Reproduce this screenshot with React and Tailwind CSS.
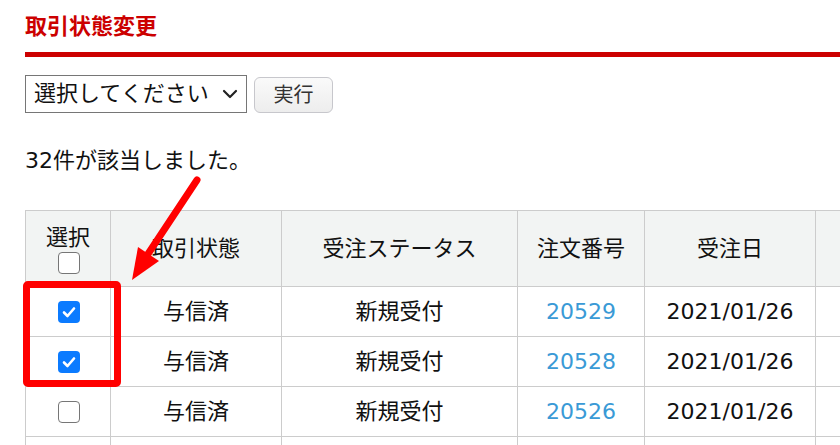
import React from "react";

const FONT = { fontFamily: '"DejaVu Sans", "Noto Sans CJK JP", sans-serif' };

function Box({ checked }) {
  if (checked) {
    return (
      <span className="inline-flex h-[22px] w-[22px] items-center justify-center rounded-[4px] bg-[#0b7bff]">
        <svg width="16" height="16" viewBox="0 0 16 16">
          <path d="M3 8.5 L6.5 12 L13 4.5" fill="none" stroke="#fff" strokeWidth="2.6" strokeLinecap="round" strokeLinejoin="round" />
        </svg>
      </span>
    );
  }
  return <span className="inline-block h-[22px] w-[22px] rounded-[4px] border border-[#767676] bg-white" />;
}

const rows = [
  { checked: true, no: "20529" },
  { checked: true, no: "20528" },
  { checked: false, no: "20526" },
];

export default function App() {
  return (
    <div className="relative h-[445px] w-[840px] overflow-hidden bg-white text-[22px] text-[#111]" style={FONT}>
      <div className="pl-[25px]">
        <div className="mt-[12px] h-[30px] text-[22px] font-bold leading-[30px] text-[#cc0000]">取引状態変更</div>
        <div className="mt-[10px] h-[5px] bg-[#cc0000]" />
        <div className="mt-[18px] flex items-end gap-[7px]">
          <div className="flex h-[38px] w-[222px] items-center justify-between border border-[#767676] bg-white pl-[8px] pr-[8px]">
            <span className="leading-none">選択してください</span>
            <svg width="16" height="10" viewBox="0 0 16 10">
              <path d="M2 2 L8 8 L14 2" fill="none" stroke="#222" strokeWidth="2.2" strokeLinecap="round" strokeLinejoin="round" />
            </svg>
          </div>
          <button className="flex h-[36px] w-[79px] items-center justify-center rounded-[6px] border border-[#c7c7cc] bg-gradient-to-b from-[#fafafa] to-[#ededed] text-[20px] text-[#333]">
            実行
          </button>
        </div>
        <div className="mt-[33px] h-[30px] leading-[30px]">32件が該当しました。</div>
        <table className="mt-[34px] table-fixed border-collapse" style={{ width: 990 }}>
          <colgroup>
            <col className="w-[85px]" />
            <col className="w-[171px]" />
            <col className="w-[236px]" />
            <col className="w-[127px]" />
            <col className="w-[171px]" />
            <col className="w-[200px]" />
          </colgroup>
          <thead>
            <tr className="h-[76px] bg-[#f2f4f3]">
              <th className="border border-[#cccccc] text-center font-normal">
                <div className="leading-[28px]">選択</div>
                <div className="flex justify-center pl-[2px]"><Box checked={false} /></div>
              </th>
              <th className="border border-[#cccccc] text-center font-normal">取引状態</th>
              <th className="border border-[#cccccc] text-center font-normal">受注ステータス</th>
              <th className="border border-[#cccccc] text-center font-normal">注文番号</th>
              <th className="border border-[#cccccc] text-center font-normal">受注日</th>
              <th className="border border-[#cccccc] text-center font-normal"></th>
            </tr>
          </thead>
          <tbody>
            {rows.map((r) => (
              <tr key={r.no} className="h-[50px]">
                <td className="border border-[#cccccc] text-center">
                  <div className="flex justify-center pl-[2px]"><Box checked={r.checked} /></div>
                </td>
                <td className="border border-[#cccccc] text-center">与信済</td>
                <td className="border border-[#cccccc] text-center">新規受付</td>
                <td className="border border-[#cccccc] text-center text-[#3a9ad6]">{r.no}</td>
                <td className="border border-[#cccccc] text-center">2021/01/26</td>
                <td className="border border-[#cccccc]"></td>
              </tr>
            ))}
            <tr className="h-[50px]">
              <td className="border border-[#cccccc]"></td>
              <td className="border border-[#cccccc]"></td>
              <td className="border border-[#cccccc]"></td>
              <td className="border border-[#cccccc]"></td>
              <td className="border border-[#cccccc]"></td>
              <td className="border border-[#cccccc]"></td>
            </tr>
          </tbody>
        </table>
      </div>

      <div className="absolute left-[23px] top-[281px] h-[106px] w-[98px] rounded-[5px] border-[7px] border-[#ff0000]" />
      <svg className="absolute left-0 top-0" width="840" height="445" viewBox="0 0 840 445">
        <line x1="197" y1="180" x2="148" y2="254" stroke="#ff0000" strokeWidth="7" strokeLinecap="round" />
        <polygon points="132,280 138,247 159,261" fill="#ff0000" />
      </svg>
    </div>
  );
}
